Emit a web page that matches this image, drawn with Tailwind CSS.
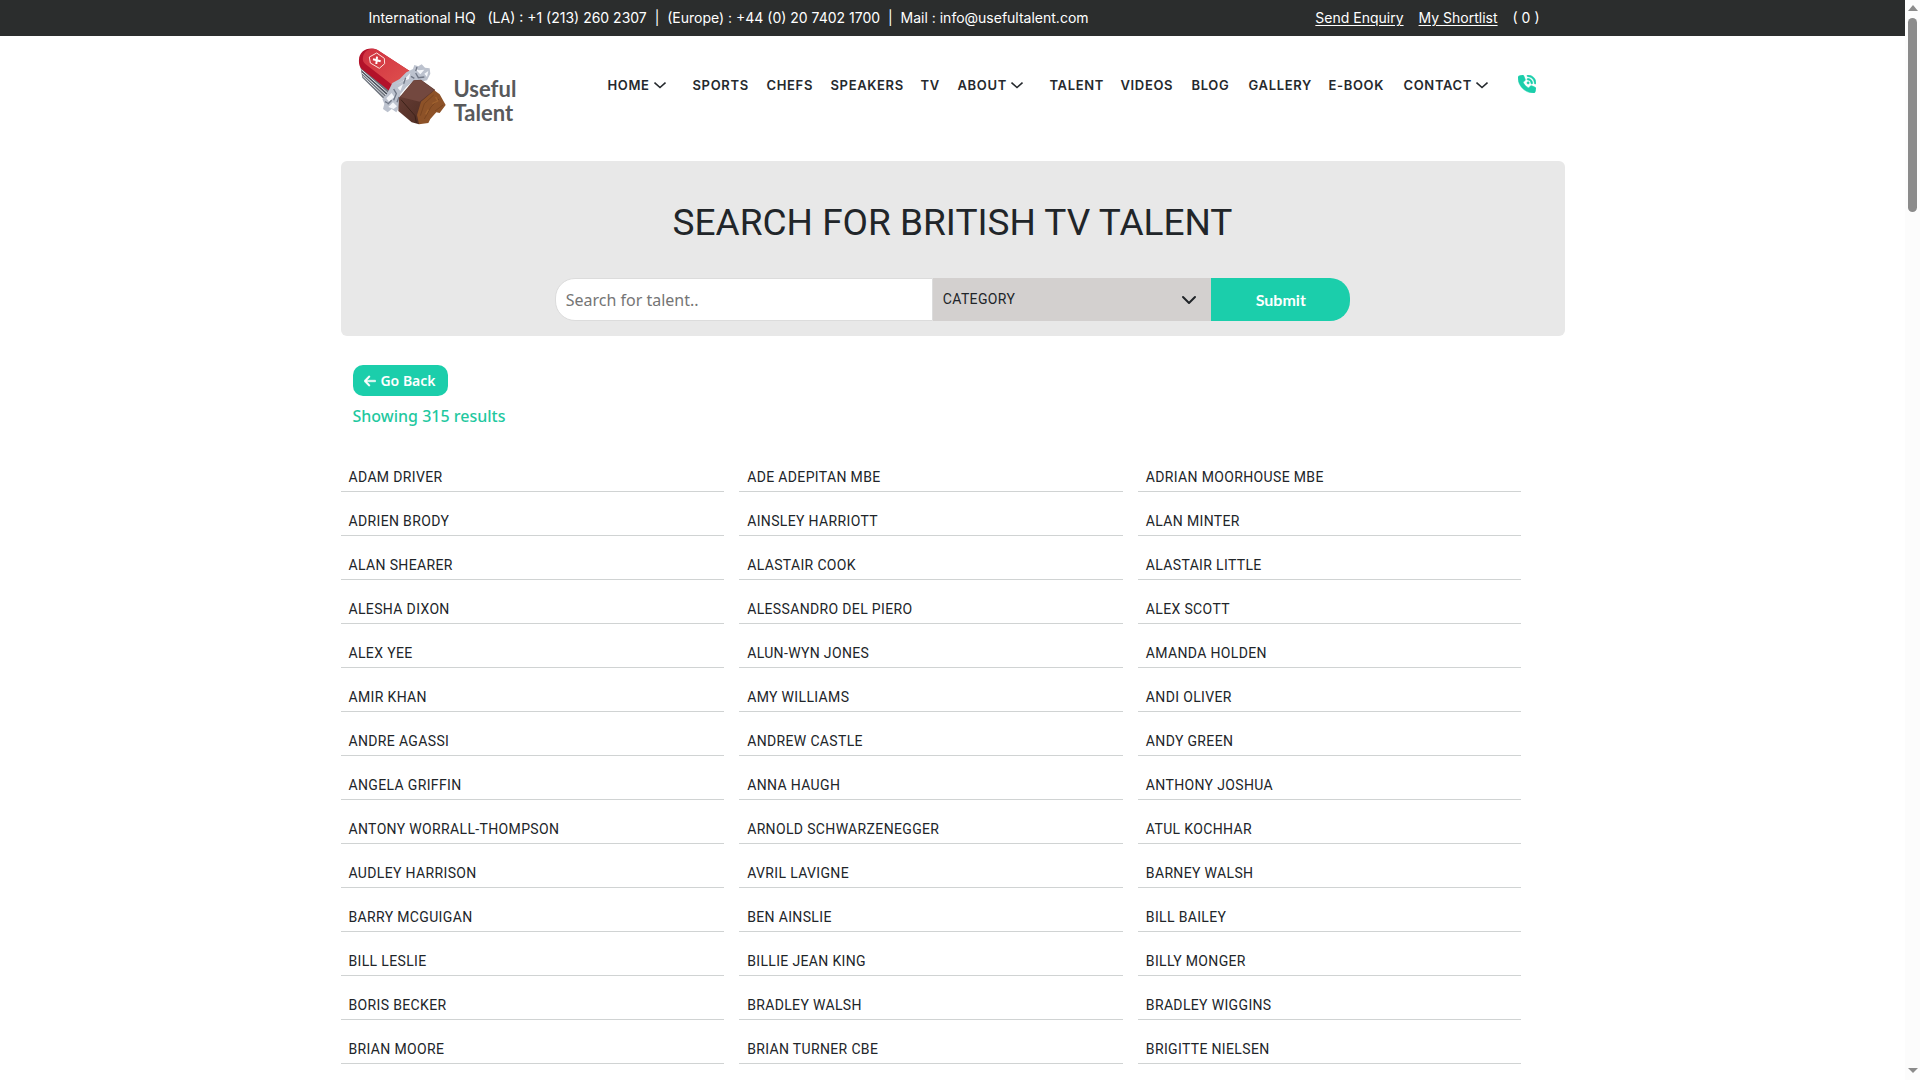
<!DOCTYPE html>
<html lang="en">
  <head>
    <meta charset="UTF-8" />
    <meta name="viewport" content="width=device-width, initial-scale=1.0" />
    <title>Search for British TV Talent | Useful Talent</title>

    <!-- Tailwind CSS -->
    <script src="https://cdn.jsdelivr.net/npm/@tailwindcss/browser@4"></script>
  </head>
  <body class="bg-white text-[#212529] font-['Noto_Sans',sans-serif] pr-[15px] min-h-screen">
    <!-- Top bar -->
    <div class="bg-[#2b2d2d] text-white text-sm leading-5 font-['Inter',sans-serif]">
      <div class="max-w-[1224px] mx-auto h-9 pl-7 pr-[25px] flex items-center justify-between whitespace-nowrap">
        <p class="whitespace-pre">International HQ   (LA) : +1 (213) 260 2307  |  (Europe) : +44 (0) 20 7402 1700  |  Mail : info@usefultalent.com</p>
        <div class="flex gap-[15px]">
          <a href="#" class="underline underline-offset-2">Send Enquiry</a>
          <a href="#" class="underline underline-offset-2">My Shortlist</a>
          <span>( 0 )</span>
        </div>
      </div>
    </div>

    <!-- Header -->
    <header class="max-w-[1224px] mx-auto h-[125px] pl-4 pr-7 pt-[11px] flex items-start justify-between">
      <a href="#" class="flex items-start gap-[7px]" aria-label="Useful Talent">
        <svg class="w-[90px] h-[80px]" viewBox="20 20 270 240" aria-hidden="true">
          <defs>
            <linearGradient id="red" x1="0" y1="0" x2="1" y2="1">
              <stop offset="0" stop-color="#cf3040" />
              <stop offset="1" stop-color="#e0524e" />
            </linearGradient>
            <linearGradient id="choc" x1="0" y1="0" x2="1" y2="1">
              <stop offset="0" stop-color="#6b4038" />
              <stop offset="1" stop-color="#4a2a20" />
            </linearGradient>
          </defs>
          <!-- blades -->
          <path d="M30 78 L36 112 L104 180 L120 148 Z" fill="#6d737d" />
          <path d="M33 88 L112 158 M35 98 L109 166 M37 107 L106 173" stroke="#e3e6ea" stroke-width="3" fill="none" />
          <path d="M34 93 L111 162" stroke="#2d3440" stroke-width="2" />
          <!-- red handle -->
          <path d="M26 58 C26 32 54 17 80 28 L178 92 L122 156 L34 86 C28 80 25 70 26 58 Z" fill="#b3122a" />
          <path d="M38 50 C42 28 64 20 82 29 L178 92 L134 140 L46 72 C39 66 36 60 38 50 Z" fill="url(#red)" />
          <path d="M57 50 L79 38 L102 54 L103 70 L87 84 L60 68 Z" fill="none" stroke="#fbe3df" stroke-width="3" />
          <path d="M80 49 L78 71 M68 57 L91 63" stroke="#fff" stroke-width="6" />
          <!-- foil -->
          <path d="M126 128 L148 116 L168 96 L188 86 L192 74 L204 78 L214 72 L224 82 L238 84 L240 100 L230 120 L212 124 L190 122 L168 140 L150 162 L150 196 L138 216 L124 206 L112 216 L98 206 L102 190 L96 176 L110 160 Z" fill="#bcc2ce" />
          <path d="M134 132 L156 124 L180 98 L176 116 Z M192 84 L206 90 L222 88 L210 102 Z M108 174 L124 158 L132 170 L116 184 Z M114 200 L128 186 L140 198 L130 206 Z M222 100 L234 92 L230 110 Z M142 142 L158 132 L150 152 Z" fill="#f4f6fa" />
          <path d="M130 146 L138 160 L130 180 M166 112 L160 130 M196 98 L204 112 L222 110 M112 192 L124 180 M104 184 L112 188 M200 80 L196 92 M146 170 L140 186 M182 108 L192 114" stroke="#717887" stroke-width="4" fill="none" />
          <!-- chocolate -->
          <path d="M190 120 L212 118 L254 148 L248 180 L206 252 L184 246 L144 212 L146 172 Z" fill="url(#choc)" />
          <path d="M190 121 L212 119 L252 149 L208 184 L150 170 Z" fill="#73483f" />
          <path d="M252 150 L268 162 L286 194 L268 218 L258 216 L240 236 L234 248 L206 252 L200 224 L212 184 Z" fill="#8d5228" />
          <path d="M250 164 L222 190 L210 226 M266 176 L242 200 L222 236 M278 194 L254 212" stroke="#7a4520" stroke-width="3" fill="none" />
          <path d="M256 170 L262 182 L246 190 M234 208 L226 222" stroke="#a0622f" stroke-width="4" fill="none" />
          <path d="M152 178 L194 226 L198 248" stroke="#3d2219" stroke-width="3" fill="none" />
        </svg>
        <span class="pt-[30px] font-['Lato',sans-serif] font-bold text-[22px] leading-6 text-[#58595b] flex flex-col">
          <span>Useful</span>
          <span>Talent</span>
        </span>
      </a>

      <nav class="pt-7 text-[13px] leading-5 font-semibold tracking-wider text-[#25292d] font-['Inter',sans-serif] grid grid-cols-[85px_74px_64px_90px_37px_92px_71px_71px_57px_80px_75px_114px_19px] whitespace-nowrap">
        <a href="#" class="flex items-center gap-1">HOME
          <svg class="w-3 h-3" viewBox="0 0 12 12" fill="none" stroke="currentColor" stroke-width="1.6"><path d="M.5 3.500 6 8.500 11.500 3.500" /></svg>
        </a>
        <a href="#">SPORTS</a>
        <a href="#">CHEFS</a>
        <a href="#">SPEAKERS</a>
        <a href="#">TV</a>
        <a href="#" class="flex items-center gap-1">ABOUT
          <svg class="w-3 h-3" viewBox="0 0 12 12" fill="none" stroke="currentColor" stroke-width="1.6"><path d="M.5 3.500 6 8.500 11.500 3.500" /></svg>
        </a>
        <a href="#">TALENT</a>
        <a href="#">VIDEOS</a>
        <a href="#">BLOG</a>
        <a href="#">GALLERY</a>
        <a href="#">E-BOOK</a>
        <a href="#" class="flex items-center gap-1">CONTACT
          <svg class="w-3 h-3" viewBox="0 0 12 12" fill="none" stroke="currentColor" stroke-width="1.6"><path d="M.5 3.500 6 8.500 11.500 3.500" /></svg>
        </a>
        <a href="#" aria-label="Call us" class="text-[#1bceab]">
          <svg class="w-[18px] h-[18px]" viewBox="0 0 512 512" fill="currentColor"><path d="M280 0C408.100 0 512 103.900 512 232c0 13.300-10.700 24-24 24s-24-10.700-24-24c0-101.600-82.400-184-184-184c-13.300 0-24-10.700-24-24s10.700-24 24-24zm8 192a32 32 0 1 1 0 64 32 32 0 1 1 0-64zm-32-72c0-13.300 10.700-24 24-24c75.100 0 136 60.900 136 136c0 13.300-10.700 24-24 24s-24-10.700-24-24c0-48.600-39.400-88-88-88c-13.300 0-24-10.700-24-24zM117.500 1.400c19.400-5.300 39.700 4.600 47.400 23.200l40 96c6.800 16.300 2.100 35.200-11.600 46.300L144 207.300c33.300 70.400 90.300 127.400 160.700 160.700L345 318.700c11.200-13.700 30-18.400 46.300-11.600l96 40c18.600 7.700 28.500 28 23.200 47.400l-24 88C481.800 499.900 466 512 448 512C200.600 512 0 311.400 0 64C0 46 12.100 30.200 29.500 25.400l88-24z" stroke="currentColor" stroke-width="16" /></svg>
        </a>
      </nav>
    </header>

    <main class="max-w-[1224px] mx-auto">
      <!-- Search -->
      <section class="bg-[#e8e8e8] rounded-md pt-[38px] pb-[15px] text-center">
        <h1 class="font-['Roboto',sans-serif] text-[37px] leading-12 uppercase mb-[31px]">Search for British TV Talent</h1>
        <form class="w-[65%] mx-auto h-[43px] flex">
          <input type="text" aria-label="Search for talent" placeholder="Search for talent.." class="flex-1 min-w-0 bg-white border border-[#dcdcdc] rounded-l-[20px] pl-2.5 text-base placeholder:text-[#757575]" />
          <div class="relative w-[35%]">
            <select aria-label="Category" class="appearance-none w-full h-full bg-[#d3d0cf] pl-2.5 pb-0.5 text-sm font-['Roboto',sans-serif] tracking-wide">
              <option>CATEGORY</option>
            </select>
            <svg class="absolute right-3.5 top-3.5 w-4 h-4 pointer-events-none" viewBox="0 0 16 16" fill="none" stroke="currentColor" stroke-width="2" stroke-linecap="round" stroke-linejoin="round"><path d="m2 5 6 6 6-6" /></svg>
          </div>
          <button type="submit" class="w-[139px] bg-[#1bceab] text-white font-bold text-base font-['Lato',sans-serif] rounded-r-[20px]">Submit</button>
        </form>
      </section>

      <div class="pl-3 pt-[29px]">
        <button type="button" class="bg-[#1bceab] text-white text-sm leading-5 font-semibold rounded-[10px] h-[31px] w-[95px] flex items-center justify-center gap-1">
          <svg class="w-3 h-3.5" viewBox="0 0 448 512" fill="currentColor"><path d="M9.400 233.400c-12.500 12.500-12.500 32.800 0 45.300l160 160c12.500 12.500 32.800 12.500 45.300 0s12.500-32.800 0-45.300L109.200 288 416 288c17.700 0 32-14.300 32-32s-14.300-32-32-32l-306.700 0L214.600 118.600c12.500-12.500 12.500-32.800 0-45.300s-32.800-12.500-45.300 0l-160 160z" stroke="currentColor" stroke-width="16" /></svg>
          Go Back
        </button>
        <p class="mt-2 text-base leading-6 font-medium text-[#1fc8a0]">Showing 315 results</p>
      </div>

      <!-- Results -->
      <ul class="mt-5 mr-[43px] grid grid-cols-3 gap-x-[15px] uppercase font-['Roboto',sans-serif] text-sm leading-6 tracking-wide [&>li]:h-11 [&>li]:flex [&>li]:items-end [&>li]:pl-2 [&>li]:pb-0.5 [&>li]:border-b [&>li]:border-[#d0d3d3]">
        <li><a href="#">Adam Driver</a></li>
        <li><a href="#">Ade Adepitan MBE</a></li>
        <li><a href="#">Adrian Moorhouse MBE</a></li>
        <li><a href="#">Adrien Brody</a></li>
        <li><a href="#">Ainsley Harriott</a></li>
        <li><a href="#">Alan Minter</a></li>
        <li><a href="#">Alan Shearer</a></li>
        <li><a href="#">Alastair Cook</a></li>
        <li><a href="#">Alastair Little</a></li>
        <li><a href="#">Alesha Dixon</a></li>
        <li><a href="#">Alessandro Del Piero</a></li>
        <li><a href="#">Alex Scott</a></li>
        <li><a href="#">Alex Yee</a></li>
        <li><a href="#">Alun-Wyn Jones</a></li>
        <li><a href="#">Amanda Holden</a></li>
        <li><a href="#">Amir Khan</a></li>
        <li><a href="#">Amy Williams</a></li>
        <li><a href="#">Andi Oliver</a></li>
        <li><a href="#">Andre Agassi</a></li>
        <li><a href="#">Andrew Castle</a></li>
        <li><a href="#">Andy Green</a></li>
        <li><a href="#">Angela Griffin</a></li>
        <li><a href="#">Anna Haugh</a></li>
        <li><a href="#">Anthony Joshua</a></li>
        <li><a href="#">Antony Worrall-Thompson</a></li>
        <li><a href="#">Arnold Schwarzenegger</a></li>
        <li><a href="#">Atul Kochhar</a></li>
        <li><a href="#">Audley Harrison</a></li>
        <li><a href="#">Avril Lavigne</a></li>
        <li><a href="#">Barney Walsh</a></li>
        <li><a href="#">Barry McGuigan</a></li>
        <li><a href="#">Ben Ainslie</a></li>
        <li><a href="#">Bill Bailey</a></li>
        <li><a href="#">Bill Leslie</a></li>
        <li><a href="#">Billie Jean King</a></li>
        <li><a href="#">Billy Monger</a></li>
        <li><a href="#">Boris Becker</a></li>
        <li><a href="#">Bradley Walsh</a></li>
        <li><a href="#">Bradley Wiggins</a></li>
        <li><a href="#">Brian Moore</a></li>
        <li><a href="#">Brian Turner CBE</a></li>
        <li><a href="#">Brigitte Nielsen</a></li>
      </ul>
    </main>

    <!-- Scrollbar -->
    <div class="fixed right-0 inset-y-0 w-[15px] bg-[#fcfcfc] flex flex-col items-center text-[#8b8b8b]" aria-hidden="true">
      <svg class="w-2.5 h-[18px]" viewBox="0 0 10 18" fill="currentColor"><path d="M5 5 10 11H0z" /></svg>
      <div class="w-[9px] h-[18%] rounded-full bg-[#8b8b8b]"></div>
      <svg class="w-2.5 h-[18px] mt-auto" viewBox="0 0 10 18" fill="currentColor"><path d="M0 6H10L5 11z" /></svg>
    </div>
  </body>
</html>
